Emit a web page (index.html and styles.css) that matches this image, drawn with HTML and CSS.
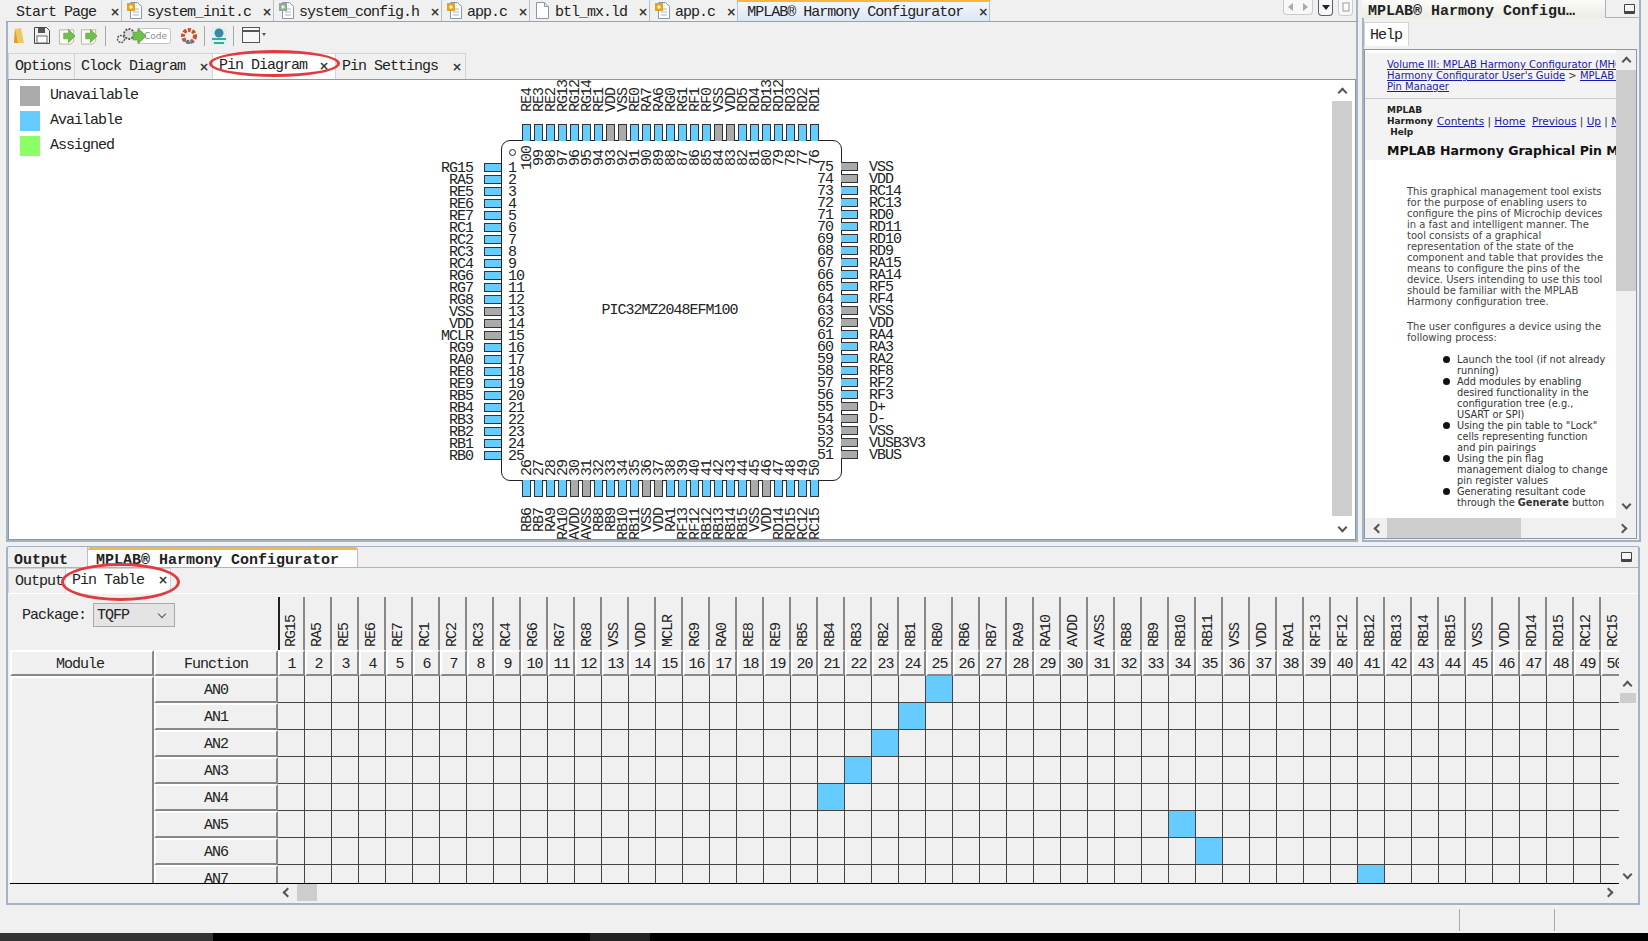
FILE: index.html
```html
<!DOCTYPE html>
<html lang="en">
<head>
    <meta charset="UTF-8">
    <title>MPLAB Harmony Configurator</title>
    <link rel="stylesheet" href="styles.css">
</head>
<body>
    <svg class="defs" width="0" height="0">
        <symbol id="doc" viewBox="0 0 15 17">
            <path d="M1.5 .5h8l4 4v12h-12z" fill="#fff" stroke="#8b97a5"/>
            <path d="M9.5 .5v4h4" fill="#dfe5ec" stroke="#8b97a5"/>
        </symbol>
        <symbol id="doc-c" viewBox="0 0 15 17">
            <path d="M3.5 .5h7l4 4v12h-11z" fill="#fff" stroke="#8b97a5"/>
            <path d="M6 7h6M6 10h6M6 13h6" stroke="#a9b2bc"/>
            <rect x="0" y="1" width="8" height="8" fill="#e8a020"/>
            <rect x="2.5" y="3.5" width="3" height="3" fill="#fff3c8"/>
        </symbol>
        <symbol id="doc-h" viewBox="0 0 15 17">
            <path d="M3.5 .5h7l4 4v12h-11z" fill="#fff" stroke="#8b97a5"/>
            <path d="M6 7h6M6 10h6M6 13h6" stroke="#a9b2bc"/>
            <rect x="0" y="1" width="8" height="8" fill="#8fa89a"/>
            <rect x="2.5" y="3.5" width="3" height="3" fill="#eef4ef"/>
        </symbol>
        <symbol id="arrow-doc" viewBox="0 0 20 18">
            <path d="M1.5 2.5h15v12l-3 3h-12z" fill="#fbfbf6" stroke="#b4b4aa"/>
            <path d="M6 6h5V2l7 7-7 7v-4H6z" fill="#6fc04a" stroke="#4f9a33" stroke-width=".6"/>
        </symbol>
    </svg>

    <div class="app">
        <div class="top-row">
            <section class="main-panel">
                <div class="tabbar">
                    <div class="tab tab-start"><span>Start Page</span><span class="close">×</span></div>
                    <div class="tab"><svg class="file-icon"><use href="#doc-c"/></svg><span>system_init.c</span><span class="close">×</span></div>
                    <div class="tab"><svg class="file-icon"><use href="#doc-h"/></svg><span>system_config.h</span><span class="close">×</span></div>
                    <div class="tab"><svg class="file-icon"><use href="#doc-c"/></svg><span>app.c</span><span class="close">×</span></div>
                    <div class="tab"><svg class="file-icon"><use href="#doc"/></svg><span>btl_mx.ld</span><span class="close">×</span></div>
                    <div class="tab"><svg class="file-icon"><use href="#doc-c"/></svg><span>app.c</span><span class="close">×</span></div>
                    <div class="tab tab-active"><span>MPLAB® Harmony Configurator</span><span class="close">×</span></div>
                    <div class="tab-nav">
                        <div class="nav-group">
                            <svg width="14" height="12" viewBox="0 0 14 12"><path d="M9 2v8L4 6z" fill="#a8a8a8"/></svg>
                            <svg width="14" height="12" viewBox="0 0 14 12"><path d="M5 2v8l5-4z" fill="#a8a8a8"/></svg>
                        </div>
                        <div class="nav-btn nav-dark"><svg width="12" height="12" viewBox="0 0 12 12"><path d="M2 4h8L6 9z" fill="#222"/></svg></div>
                        <div class="nav-btn"><svg width="12" height="12" viewBox="0 0 12 12"><rect x="3" y="2" width="6" height="8" fill="#fff" stroke="#999"/></svg></div>
                    </div>
                </div>

                <div class="toolbar">
                    <svg class="tool-folder" width="12" height="17" viewBox="0 0 12 17"><path d="M2 2l6-1 3 15H1z" fill="#f0c860"/><path d="M2 2l3 14H1z" fill="#d8a030"/></svg>
                    <svg class="tool-save" width="16" height="17" viewBox="0 0 16 17"><path d="M.5 .5h12l3 3v13H.5z" fill="#f2f2f2" stroke="#444"/><rect x="4" y="1" width="7" height="5" fill="#555"/><rect x="3" y="9" width="10" height="7" fill="#fff" stroke="#666"/></svg>
                    <svg class="tool-arrow" width="19" height="18"><use href="#arrow-doc"/></svg>
                    <svg class="tool-arrow" width="19" height="18"><use href="#arrow-doc"/></svg>
                    <span class="tool-sep"></span>
                    <div class="tool-code">
                        <svg width="36" height="18" viewBox="0 0 32 18">
                            <circle cx="6" cy="12" r="3.5" fill="#eee" stroke="#555" stroke-width="1.4" stroke-dasharray="2 1"/>
                            <circle cx="14" cy="7" r="5" fill="#ddd" stroke="#555" stroke-width="1.8" stroke-dasharray="2 1.2"/>
                            <path d="M18 5h5V1l8 8-8 8v-4h-5z" fill="#6fc04a" stroke="#4f9a33" stroke-width=".6"/>
                        </svg>
                        <span class="code-box">Code</span>
                    </div>
                    <svg class="tool-red" width="18" height="18" viewBox="0 0 18 18"><circle cx="9" cy="9" r="6" fill="none" stroke="#c8502a" stroke-width="4" stroke-dasharray="3 1.4"/><path d="M3 12l5 4 6-1" fill="none" stroke="#5a7fa0" stroke-width="2"/></svg>
                    <span class="tool-sep"></span>
                    <svg class="tool-blue" width="16" height="18" viewBox="0 0 16 18"><rect x="0" y="0" width="16" height="18" fill="#dff1ee"/><circle cx="8" cy="6" r="4.5" fill="#3a88a8"/><path d="M1 11h14v2H1zM3 15h10v2H3z" fill="#3aa8a0"/></svg>
                    <span class="tool-sep"></span>
                    <svg class="tool-window" width="24" height="17" viewBox="0 0 24 17"><rect x=".5" y=".5" width="17" height="15" fill="#f7f7f7" stroke="#555"/><path d="M1 4h16" stroke="#555" stroke-width="2"/><path d="M20 6h4l-2 3z" fill="#555"/></svg>
                </div>

                <div class="subtabs">
                    <div class="subtab"><span>Options</span></div>
                    <div class="subtab"><span>Clock Diagram</span><span class="close">×</span></div>
                    <div class="subtab subtab-active circled"><span>Pin Diagram</span><span class="close">×</span></div>
                    <div class="subtab"><span>Pin Settings</span><span class="close">×</span></div>
                </div>

                <div class="diagram-box">
                    <div class="diagram">
                        <ul class="legend">
                            <li><span class="swatch swatch-grey"></span>Unavailable</li>
                            <li><span class="swatch swatch-blue"></span>Available</li>
                            <li><span class="swatch swatch-green"></span>Assigned</li>
                        </ul>
                        <div class="chip">
                            <span class="pin-one"></span>
                            <span class="chip-name">PIC32MZ2048EFM100</span>
                        </div>
                        <div class="side side-left" id="sideLeft"></div>
                        <div class="side side-right" id="sideRight"></div>
                        <div class="side side-top" id="sideTop"></div>
                        <div class="side side-bottom" id="sideBottom"></div>
                    </div>
                    <div class="vscroll vscroll-main">
                        <i class="chev chev-up"></i>
                        <div class="thumb"></div>
                        <i class="chev chev-down"></i>
                    </div>
                </div>
            </section>

            <aside class="help-panel">
                <div class="help-head">
                    <div class="help-title">MPLAB® Harmony Configu…</div>
                    <span class="min-btn"></span>
                </div>
                <div class="help-tabs"><div class="help-tab">Help</div></div>
                <div class="help-box">
                    <div class="help-row">
                        <div class="help-view">
                            <div class="help-nav">
                                <div class="crumbs">
                                    <a>Volume III: MPLAB Harmony Configurator (MHC)</a><br>
                                    <a>Harmony Configurator User's Guide</a> &gt; <a>MPLAB Harmony</a><br>
                                    <a>Pin Manager</a>
                                </div>
                                <div class="help-links">
                                    <b class="help-brand">MPLAB<br>Harmony<br>&nbsp;Help</b>
                                    <span class="link-row"><a>Contents</a> | <a>Home</a> &nbsp;<a>Previous</a> | <a>Up</a> | <a>Next</a></span>
                                </div>
                                <h2>MPLAB Harmony Graphical Pin Manager</h2>
                            </div>
                            <div class="help-body">
                                <p>This graphical management tool exists<br>for the purpose of enabling users to<br>configure the pins of Microchip devices<br>in a fast and intelligent manner. The<br>tool consists of a graphical<br>representation of the state of the<br>component and table that provides the<br>means to configure the pins of the<br>device. Users intending to use this tool<br>should be familiar with the MPLAB<br>Harmony configuration tree.</p>
                                <p>The user configures a device using the<br>following process:</p>
                                <ul>
                                    <li>Launch the tool (if not already<br>running)</li>
                                    <li>Add modules by enabling<br>desired functionality in the<br>configuration tree (e.g.,<br>USART or SPI)</li>
                                    <li>Using the pin table to "Lock"<br>cells representing function<br>and pin pairings</li>
                                    <li>Using the pin flag<br>management dialog to change<br>pin register values</li>
                                    <li>Generating resultant code<br>through the <b>Generate</b> button</li>
                                </ul>
                            </div>
                        </div>
                        <div class="vscroll vscroll-help">
                            <i class="chev chev-up"></i>
                            <div class="thumb"></div>
                            <i class="chev chev-down"></i>
                        </div>
                    </div>
                    <div class="hscroll hscroll-help">
                        <i class="chev chev-left"></i>
                        <div class="thumb"></div>
                        <i class="chev chev-right"></i>
                    </div>
                </div>
            </aside>
        </div>

        <section class="bottom-panel">
            <div class="bottom-tabs">
                <div class="bottom-tab">Output</div>
                <div class="bottom-tab bottom-tab-active">MPLAB® Harmony Configurator</div>
                <span class="min-btn"></span>
            </div>
            <div class="subtabs subtabs-bottom">
                <div class="subtab subtab-output"><span>Output</span></div>
                <div class="subtab subtab-active subtab-table circled"><span>Pin Table</span><span class="close">×</span></div>
            </div>
            <div class="table-wrap">
                <div class="table-view">
                    <div class="pin-table" id="pinTable">
                        <div class="package-cell">
                            <span>Package:</span>
                            <div class="package-select"><span>TQFP</span><i class="chev chev-down"></i></div>
                        </div>
                    </div>
                    <div class="vscroll vscroll-table">
                        <i class="chev chev-up"></i>
                        <div class="thumb"></div>
                        <i class="chev chev-down"></i>
                    </div>
                </div>
                <div class="hscroll hscroll-table">
                    <i class="chev chev-left"></i>
                    <div class="thumb"></div>
                    <i class="chev chev-right"></i>
                </div>
            </div>
        </section>

        <div class="statusbar">
            <span class="status-cell"></span>
            <span class="status-cell status-cell-last"></span>
        </div>
        <div class="taskbar">
            <span class="task task-first"></span>
            <span class="task task-second"></span>
        </div>
    </div>

    <script src="script.js"></script>
</body>
</html>
```

FILE: styles.css
```css
* {
    box-sizing: border-box;
}
html, body {
    margin: 0;
    height: 941px;
    overflow: hidden;
}
body {
    background: #f0f0f0;
    color: #222;
    font-family: "Liberation Mono", monospace;
    font-size: 15px;
    letter-spacing: -1px;
    line-height: 1;
    white-space: nowrap;
}
.defs {
    position: absolute;
}
.app {
    display: flex;
    flex-direction: column;
    width: 1648px;
    height: 941px;
}
.top-row {
    display: flex;
    height: 546px;
    padding-left: 6px;
}

/* editor tabs */
.main-panel {
    width: 1352px;
    height: 542px;
    border-left: 2px solid #a3b3c6;
    border-right: 2px solid #a3b3c6;
    border-bottom: 2px solid #a3b3c6;
}
.tabbar {
    display: flex;
    align-items: stretch;
    height: 22px;
    margin-left: -2px;
    margin-right: -2px;
    border-bottom: 1px solid #9aa3ad;
}
.tab {
    display: flex;
    align-items: center;
    gap: 11px;
    padding: 3px 3px 0 5px;
    border-right: 1px solid #b9c0c8;
    background: #f0f0f0;
}
.tab .file-icon {
    margin-top: -3px;
}
.tab-start {
    gap: 14px;
    padding-left: 10px;
}
.tab-active {
    gap: 15px;
    padding-top: 1px;
    padding-left: 9px;
    border-top: 2px solid #f5b642;
    background: linear-gradient(#f4f7fc, #dbe6f6);
}
.file-icon {
    width: 15px;
    height: 17px;
    margin-right: -6px;
}
.close {
    width: 8px;
    font-family: "DejaVu Sans", sans-serif;
    font-size: 12px;
    font-weight: bold;
    letter-spacing: 0;
    text-align: center;
    color: #333;
}
.tab-nav {
    display: flex;
    align-items: flex-start;
    gap: 5px;
    margin-left: 293px;
}
.nav-group {
    display: flex;
    height: 15px;
    padding-top: 1px;
    border: 1px solid #c8ccd2;
    border-top: 0;
    border-radius: 0 0 4px 4px;
    background: #f8f8f8;
}
.nav-btn {
    width: 15px;
    height: 16px;
    padding: 1px;
    border: 1px solid #c8ccd2;
    border-top: 0;
    border-radius: 0 0 4px 4px;
    background: #f8f8f8;
}
.nav-dark {
    border-color: #55606c;
}

/* toolbar */
.toolbar {
    display: flex;
    align-items: center;
    height: 31px;
    padding-left: 5px;
    padding-bottom: 4px;
}
.tool-save {
    margin-left: 9px;
}
.tool-arrow {
    margin-left: 3px;
}
.tool-save + .tool-arrow {
    margin-left: 8px;
}
.tool-sep {
    width: 1px;
    height: 20px;
    margin: 0 6px;
    background: #a8a8a8;
}
.tool-code {
    display: flex;
    align-items: center;
    margin-left: 1px;
}
.code-box {
    width: 34px;
    height: 16px;
    margin-left: -12px;
    padding-top: 3px;
    padding-left: 6px;
    border: 1px solid #c4c4c4;
    border-radius: 3px;
    background: #fff;
    color: #8c8c8c;
    font-family: "DejaVu Sans", sans-serif;
    font-size: 9px;
    letter-spacing: 0;
}
.tool-code svg {
    position: relative;
    z-index: 1;
}
.tool-red {
    margin-left: 9px;
}
.tool-window {
    margin-left: 2px;
}

/* sub tabs */
.subtabs {
    display: flex;
    height: 26px;
}
.subtab {
    position: relative;
    display: flex;
    align-items: center;
    gap: 14px;
    padding: 0 5px 0 6px;
    border: 1px solid #d4d4d4;
    border-bottom: 0;
    margin-right: -1px;
    background: #f0f0f0;
}
.subtab:first-child {
    width: 67px;
    padding-left: 6px;
}
.subtab-active {
    padding: 0 8px 2px 6px;
    gap: 12px;
    background: #fff;
    z-index: 1;
}
.circled::after {
    content: "";
    position: absolute;
    left: -4px;
    right: -5px;
    top: -4px;
    bottom: 2px;
    border: 3px solid #e23b3f;
    border-radius: 50%;
}

/* diagram */
.diagram-box {
    display: flex;
    height: 461px;
    border: 1px solid #8e98a3;
    background: #fff;
}
.diagram {
    position: relative;
    flex: 1;
    overflow: hidden;
}
.legend {
    margin: 0;
    padding: 3px 0 0 11px;
    list-style: none;
}
.legend li {
    display: flex;
    align-items: center;
    gap: 10px;
    height: 25px;
}
.swatch {
    width: 20px;
    height: 20px;
}
.swatch-grey {
    background: #aaa;
}
.swatch-blue {
    background: #66ccff;
}
.swatch-green {
    background: #8cff66;
}
/* diagram origin is at 9,80 on the page */
.chip {
    position: absolute;
    left: 492px;
    top: 60px;
    width: 341px;
    height: 341px;
    display: flex;
    align-items: center;
    justify-content: center;
    padding-right: 4px;
    border: 1px solid #222;
    border-radius: 9px;
}
.pin-one {
    position: absolute;
    left: 7px;
    top: 8px;
    width: 7px;
    height: 7px;
    border: 1px solid #222;
    border-radius: 50%;
}
.side {
    position: absolute;
    display: flex;
}
.side-left,
.side-right {
    flex-direction: column;
}
.side-left {
    left: 411px;
    top: 81px;
}
.side-right {
    left: 791px;
    top: 80px;
}
.side-top {
    left: 511px;
    top: 0;
}
.side-bottom {
    left: 511px;
    top: 374px;
}
.row {
    display: flex;
    align-items: center;
    height: 12px;
}
.col {
    display: flex;
    flex-direction: column;
    align-items: center;
    width: 12px;
}
.pin {
    background: #66ccff;
    border: 1px solid #333;
    flex: none;
}
.pin-off {
    background: #aaa;
}
.row .pin {
    width: 17px;
    height: 9px;
}
.side-left .pin {
    border-right: 0;
}
.side-right .pin {
    border-left: 0;
}
.col .pin {
    width: 9px;
    height: 17px;
}
.side-top .pin {
    border-bottom: 0;
    margin: 12px 0 1px;
}
.side-bottom .pin {
    border-top: 0;
    margin: -1px 0 11px;
}
.label,
.num {
    white-space: nowrap;
    line-height: 12px;
}
.row .label,
.row .num {
    padding-top: 3px;
}
.side-left .label {
    width: 53px;
    margin-right: 11px;
    text-align: right;
}
.side-left .num {
    margin-left: 7px;
}
.side-right .num {
    width: 33px;
    margin-right: 8px;
    text-align: right;
}
.side-right .label {
    margin-left: 11px;
}
.col .label,
.col .num {
    width: 12px;
    margin-left: 4px;
    writing-mode: vertical-rl;
    transform: rotate(180deg);
}
.col .label {
    height: 32px;
}
.col .num {
    height: 32px;
    text-align: center;
}
.side-bottom .num {
    height: 27px;
}
.side-bottom .label {
    text-align: right;
}

/* scrollbars */
.vscroll,
.hscroll {
    display: flex;
    align-items: center;
    justify-content: space-between;
    flex: none;
}
.vscroll {
    flex-direction: column;
}
.thumb {
    background: #cdcdcd;
}
.chev {
    display: block;
    width: 7px;
    height: 7px;
    flex: none;
    border-left: 2px solid #555;
    border-top: 2px solid #555;
}
.chev-up {
    transform: rotate(45deg);
}
.chev-down {
    transform: rotate(225deg);
}
.chev-left {
    transform: rotate(-45deg);
}
.chev-right {
    transform: rotate(135deg);
}
.vscroll-main {
    width: 20px;
    margin-right: 3px;
    padding: 9px 0 8px;
}
.vscroll-main .thumb {
    width: 20px;
    height: 415px;
    margin: 1px 0 4px;
}

/* help panel */
.help-panel {
    width: 279px;
    height: 542px;
    margin-left: 4px;
    border-left: 2px solid #a3b3c6;
    border-right: 2px solid #a3b3c6;
    border-bottom: 2px solid #a3b3c6;
}
.help-head {
    display: flex;
    align-items: center;
    height: 18px;
    margin-left: -2px;
    margin-right: -2px;
    border-bottom: 1px solid #a9b4c0;
}
.help-title {
    width: 244px;
    height: 18px;
    padding: 4px 0 0 6px;
    background: linear-gradient(#fbfbf8, #ecebe4);
    border-right: 1px solid #a9b4c0;
    font-weight: bold;
    letter-spacing: 0;
}
.min-btn {
    display: block;
    width: 11px;
    height: 10px;
    margin-left: 18px;
    border: 1px solid #444;
    border-bottom-width: 3px;
    background: #f5f5f5;
    border-radius: 1px;
}
.help-tabs {
    height: 31px;
    padding-top: 4px;
}
.help-tab {
    width: 45px;
    height: 24px;
    padding: 5px 0 0 5px;
    background: #fff;
    border: 1px solid #d4d4d4;
    border-bottom: 0;
}
.help-box {
    height: 490px;
    margin-right: 2px;
    border: 1px solid #8e98a3;
    background: #f0f0f0;
}
.help-row {
    display: flex;
    height: 468px;
}
.help-view {
    width: 251px;
    padding-top: 3px;
    overflow: hidden;
    background: #fff;
    font-family: "DejaVu Sans", sans-serif;
    font-size: 10px;
    line-height: 11px;
    letter-spacing: 0;
}
.help-nav {
    height: 107px;
    background: #f3f3f3;
}
.crumbs {
    height: 46px;
    padding: 6px 0 0 22px;
    border-bottom: 1px solid #ccc;
    color: #333;
}
.help-nav a {
    color: #1a1aaa;
    text-decoration: underline;
}
.help-links {
    display: flex;
    align-items: center;
    padding: 6px 0 0 22px;
}
.help-brand {
    color: #222;
    font-size: 9px;
}
.link-row {
    margin-left: 4px;
    color: #333;
    font-size: 10.5px;
}
.help-nav h2 {
    margin: 5px 0 0 22px;
    font-size: 12.5px;
    line-height: 16px;
    color: #111;
}
.help-body {
    padding: 26px 0 0 42px;
    color: #444;
}
.help-body p {
    margin: 0 0 14px;
}
.help-body ul {
    margin: -3px 0 0;
    padding: 0 0 0 50px;
    list-style: none;
    color: #333;
    font-size: 9.8px;
}
.help-body li {
    position: relative;
}
.help-body li::before {
    content: "";
    position: absolute;
    left: -14px;
    top: 2px;
    width: 7px;
    height: 7px;
    border-radius: 50%;
    background: #111;
}
.vscroll-help {
    width: 20px;
    padding: 8px 0 10px;
}
.vscroll-help .thumb {
    width: 20px;
    height: 221px;
    margin-top: 5px;
    margin-bottom: auto;
}
.hscroll-help {
    height: 20px;
    padding: 0 10px;
}
.hscroll-help .thumb {
    width: 134px;
    height: 20px;
    margin-left: 5px;
    margin-right: auto;
}

/* bottom panel */
.bottom-panel {
    position: relative;
    width: 1634px;
    height: 359px;
    margin: 0 8px 0 6px;
    border: 2px solid #a3b3c6;
    border-top: 1px solid #a3b3c6;
    border-radius: 3px 3px 0 0;
}
.bottom-tabs {
    display: flex;
    align-items: flex-end;
    height: 21px;
    border-bottom: 1px solid #a9b4c0;
    font-weight: bold;
    letter-spacing: 0;
}
.bottom-tab {
    height: 20px;
    width: 80px;
    padding: 6px 0 0 6px;
    border-right: 1px solid #b9c0c8;
}
.bottom-tab-active {
    width: 270px;
    padding: 3px 0 0 8px;
    background: #fff;
    border-top: 3px solid #f5b642;
    border-radius: 3px 3px 0 0;
}
.bottom-tabs .min-btn {
    margin: 0 6px 5px auto;
}
.subtabs-bottom {
    height: 25px;
}
.subtabs-bottom .subtab:first-child {
    width: 58px;
    padding-left: 6px;
}
.subtabs-bottom .subtab:last-child {
    width: 106px;
    padding-left: 6px;
    gap: 14px;
}
.subtab-table.circled::after {
    left: -5px;
    right: -10px;
    top: -6px;
    bottom: -8px;
}
.table-wrap {
    padding-top: 3px;
    border-top: 1px solid #fff;
}
.table-view {
    display: flex;
    height: 287px;
    margin-left: 2px;
}
.pin-table {
    display: grid;
    grid-template-columns: 144px 124px repeat(50, 27px);
    grid-template-rows: 53px 26px repeat(8, 27px);
    width: 1609px;
    height: 287px;
    overflow: hidden;
    border-bottom: 1px solid #000;
}
.package-cell {
    grid-column: 1 / 3;
    display: flex;
    gap: 7px;
    padding: 6px 0 0 12px;
}
.package-cell > span {
    margin-top: 5px;
}
.package-select {
    display: flex;
    align-items: center;
    justify-content: space-between;
    width: 82px;
    height: 24px;
    padding: 0 9px 0 3px;
    background: #e4e4e4;
    border: 1px solid #aaa;
}
.package-select .chev {
    width: 6px;
    height: 6px;
    border-width: 1px;
    margin-top: -3px;
}
.head {
    display: flex;
    align-items: center;
    justify-content: center;
    padding-top: 2px;
    background: #f0f0f0;
    border-top: 2px solid #fff;
    border-left: 2px solid #fff;
    border-right: 2px solid #888;
    border-bottom: 2px solid #888;
}
.head-name {
    writing-mode: vertical-rl;
    transform: rotate(180deg);
    justify-content: flex-start;
    border: 0;
    border-left: 2px solid #888;
    padding: 3px 0 0;
    line-height: 23px;
}
.head-first {
    border-right: 2px solid #222;
}
.head-module {
    padding-right: 4px;
}
.module-cell {
    grid-row: 3 / 11;
    grid-column: 1;
    border-top: 2px solid #fff;
    border-left: 2px solid #fff;
    border-right: 2px solid #888;
}
.cell {
    border-right: 1px solid #444;
    border-bottom: 1px solid #444;
}
.cell-on {
    background: #66ccff;
}
.vscroll-table {
    width: 17px;
    padding: 85px 0 6px;
}
.vscroll-table .thumb {
    width: 16px;
    height: 10px;
    margin-top: 4px;
    margin-bottom: auto;
}
.hscroll-table {
    width: 1340px;
    height: 17px;
    margin-left: 270px;
    padding: 0 6px;
}
.hscroll-table .thumb {
    width: 20px;
    height: 17px;
    margin-left: 6px;
    margin-right: auto;
}

/* status and task bars */
.statusbar {
    display: flex;
    height: 28px;
    padding-top: 4px;
    padding-left: 1459px;
}
.status-cell {
    width: 155px;
    height: 22px;
    border-left: 1px solid #aaa;
}
.taskbar {
    display: flex;
    height: 8px;
    background: #000;
}
.task-first {
    width: 213px;
    background: #333;
}
.task-second {
    width: 60px;
    margin-left: 377px;
    background: #222;
}
```

FILE: script.js
```js
const leftPins = ['RG15', 'RA5', 'RE5', 'RE6', 'RE7', 'RC1', 'RC2', 'RC3', 'RC4', 'RG6', 'RG7', 'RG8', 'VSS', 'VDD', 'MCLR', 'RG9', 'RA0', 'RE8', 'RE9', 'RB5', 'RB4', 'RB3', 'RB2', 'RB1', 'RB0'];
const bottomPins = ['RB6', 'RB7', 'RA9', 'RA10', 'AVDD', 'AVSS', 'RB8', 'RB9', 'RB10', 'RB11', 'VSS', 'VDD', 'RA1', 'RF13', 'RF12', 'RB12', 'RB13', 'RB14', 'RB15', 'VSS', 'VDD', 'RD14', 'RD15', 'RC12', 'RC15'];
const rightPins = ['VBUS', 'VUSB3V3', 'VSS', 'D-', 'D+', 'RF3', 'RF2', 'RF8', 'RA2', 'RA3', 'RA4', 'VDD', 'VSS', 'RF4', 'RF5', 'RA14', 'RA15', 'RD9', 'RD10', 'RD11', 'RD0', 'RC13', 'RC14', 'VDD', 'VSS'];
const topPins = ['RD1', 'RD2', 'RD3', 'RD12', 'RD13', 'RD4', 'RD5', 'VDD', 'VSS', 'RF0', 'RF1', 'RG1', 'RG0', 'RA6', 'RA7', 'RE0', 'VSS', 'VDD', 'RE1', 'RG14', 'RG12', 'RG13', 'RE2', 'RE3', 'RE4'];

const offNames = ['VSS', 'VDD', 'MCLR', 'AVDD', 'AVSS', 'D+', 'D-', 'VUSB3V3', 'VBUS'];

// function name -> pin number that is available in the table
const functions = [['AN0', 25], ['AN1', 24], ['AN2', 23], ['AN3', 22], ['AN4', 21], ['AN5', 34], ['AN6', 35], ['AN7', 41]];

function makePin(name, number, type) {
    const off = offNames.includes(name) ? ' pin-off' : '';
    const label = `<span class="label">${name}</span>`;
    const pin = `<span class="pin${off}"></span>`;
    const num = `<span class="num">${number}</span>`;
    if (type === 'left') return `<div class="row">${label}${pin}${num}</div>`;
    if (type === 'right') return `<div class="row">${num}${pin}${label}</div>`;
    if (type === 'top') return `<div class="col">${label}${pin}${num}</div>`;
    return `<div class="col">${num}${pin}${label}</div>`;
}

document.getElementById('sideLeft').innerHTML = leftPins.map((n, i) => makePin(n, i + 1, 'left')).join('');
document.getElementById('sideBottom').innerHTML = bottomPins.map((n, i) => makePin(n, i + 26, 'bottom')).join('');
document.getElementById('sideRight').innerHTML = rightPins.map((n, i) => makePin(n, i + 51, 'right')).reverse().join('');
document.getElementById('sideTop').innerHTML = topPins.map((n, i) => makePin(n, i + 76, 'top')).reverse().join('');

// pin table, all of it sits in one css grid
const tablePins = leftPins.concat(bottomPins);
let html = '';

tablePins.forEach((name, i) => {
    html += `<div class="head head-name${i === 0 ? ' head-first' : ''}">${name}</div>`;
});
html += '<div class="head head-module">Module</div><div class="head">Function</div>';
tablePins.forEach((name, i) => {
    html += `<div class="head">${i + 1}</div>`;
});
html += '<div class="module-cell"></div>';
functions.forEach(([name, pin]) => {
    html += `<div class="head">${name}</div>`;
    for (let n = 1; n <= 50; n++) {
        html += `<div class="cell${n === pin ? ' cell-on' : ''}"></div>`;
    }
});

document.getElementById('pinTable').insertAdjacentHTML('beforeend', html);
```
